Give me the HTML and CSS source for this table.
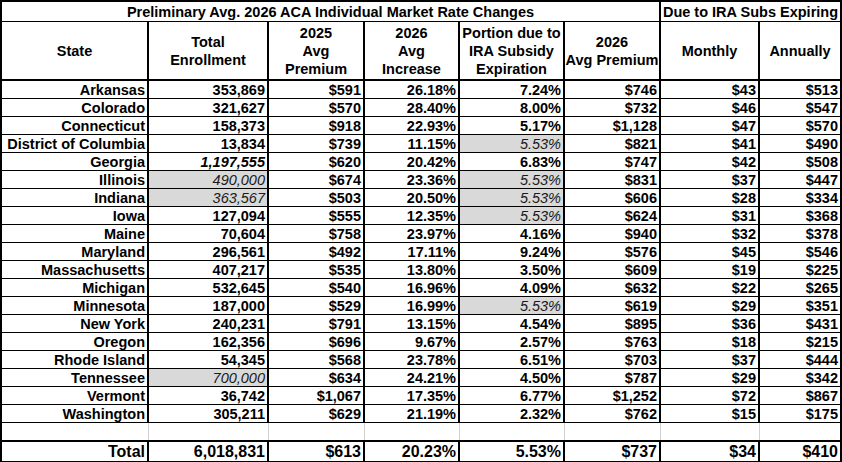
FILE: index.html
```html
<!DOCTYPE html>
<html>
<head>
<meta charset="utf-8">
<link rel="stylesheet" href="styles.css">
</head>
<body>
<table class="rates">
  <colgroup>
    <col class="c-state"><col class="c-enr"><col class="c-p25"><col class="c-inc"><col class="c-por"><col class="c-p26"><col class="c-mon"><col class="c-ann">
  </colgroup>
  <thead>
    <tr class="title-row">
      <th colspan="6">Preliminary Avg. 2026 ACA Individual Market Rate Changes</th>
      <th colspan="2">Due to IRA Subs Expiring</th>
    </tr>
    <tr class="head-row">
      <th>State</th>
      <th>Total<br>Enrollment</th>
      <th>2025<br>Avg<br>Premium</th>
      <th>2026<br>Avg<br>Increase</th>
      <th>Portion due to<br>IRA Subsidy<br>Expiration</th>
      <th>2026<br>Avg Premium</th>
      <th>Monthly</th>
      <th>Annually</th>
    </tr>
  </thead>
  <tbody>
    <tr><td>Arkansas</td><td>353,869</td><td>$591</td><td>26.18%</td><td>7.24%</td><td>$746</td><td>$43</td><td>$513</td></tr>
    <tr><td>Colorado</td><td>321,627</td><td>$570</td><td>28.40%</td><td>8.00%</td><td>$732</td><td>$46</td><td>$547</td></tr>
    <tr><td>Connecticut</td><td>158,373</td><td>$918</td><td>22.93%</td><td>5.17%</td><td>$1,128</td><td>$47</td><td>$570</td></tr>
    <tr><td>District of Columbia</td><td>13,834</td><td>$739</td><td>11.15%</td><td class="est">5.53%</td><td>$821</td><td>$41</td><td>$490</td></tr>
    <tr><td>Georgia</td><td class="it">1,197,555</td><td>$620</td><td>20.42%</td><td>6.83%</td><td>$747</td><td>$42</td><td>$508</td></tr>
    <tr><td>Illinois</td><td class="est">490,000</td><td>$674</td><td>23.36%</td><td class="est">5.53%</td><td>$831</td><td>$37</td><td>$447</td></tr>
    <tr><td>Indiana</td><td class="est">363,567</td><td>$503</td><td>20.50%</td><td class="est">5.53%</td><td>$606</td><td>$28</td><td>$334</td></tr>
    <tr><td>Iowa</td><td>127,094</td><td>$555</td><td>12.35%</td><td class="est">5.53%</td><td>$624</td><td>$31</td><td>$368</td></tr>
    <tr><td>Maine</td><td>70,604</td><td>$758</td><td>23.97%</td><td>4.16%</td><td>$940</td><td>$32</td><td>$378</td></tr>
    <tr><td>Maryland</td><td>296,561</td><td>$492</td><td>17.11%</td><td>9.24%</td><td>$576</td><td>$45</td><td>$546</td></tr>
    <tr><td>Massachusetts</td><td>407,217</td><td>$535</td><td>13.80%</td><td>3.50%</td><td>$609</td><td>$19</td><td>$225</td></tr>
    <tr><td>Michigan</td><td>532,645</td><td>$540</td><td>16.96%</td><td>4.09%</td><td>$632</td><td>$22</td><td>$265</td></tr>
    <tr><td>Minnesota</td><td>187,000</td><td>$529</td><td>16.99%</td><td class="est">5.53%</td><td>$619</td><td>$29</td><td>$351</td></tr>
    <tr><td>New York</td><td>240,231</td><td>$791</td><td>13.15%</td><td>4.54%</td><td>$895</td><td>$36</td><td>$431</td></tr>
    <tr><td>Oregon</td><td>162,356</td><td>$696</td><td>9.67%</td><td>2.57%</td><td>$763</td><td>$18</td><td>$215</td></tr>
    <tr><td>Rhode Island</td><td>54,345</td><td>$568</td><td>23.78%</td><td>6.51%</td><td>$703</td><td>$37</td><td>$444</td></tr>
    <tr><td>Tennessee</td><td class="est">700,000</td><td>$634</td><td>24.21%</td><td>4.50%</td><td>$787</td><td>$29</td><td>$342</td></tr>
    <tr><td>Vermont</td><td>36,742</td><td>$1,067</td><td>17.35%</td><td>6.77%</td><td>$1,252</td><td>$72</td><td>$867</td></tr>
    <tr><td>Washington</td><td>305,211</td><td>$629</td><td>21.19%</td><td>2.32%</td><td>$762</td><td>$15</td><td>$175</td></tr>
    <tr class="blank-row"><td></td><td></td><td></td><td></td><td></td><td></td><td></td><td></td></tr>
    <tr class="total-row"><td>Total</td><td>6,018,831</td><td>$613</td><td>20.23%</td><td>5.53%</td><td>$737</td><td>$34</td><td>$410</td></tr>
  </tbody>
</table>
</body>
</html>
```

FILE: styles.css
```css
html, body {
  margin: 0;
  padding: 0;
  background: #ffffff;
}

.rates {
  border-collapse: collapse;
  table-layout: fixed;
  width: 840px;
  font-family: "Liberation Sans", Arial, sans-serif;
  font-weight: bold;
  font-size: 14.5px;
  color: #000;
  margin-left: 0;
}

.c-state { width: 147px; }
.c-enr { width: 120px; }
.c-p25 { width: 96px; }
.c-inc { width: 95px; }
.c-por { width: 105px; }
.c-p26 { width: 96px; }
.c-mon { width: 99px; }
.c-ann { width: 82px; }

.rates th,
.rates td {
  border-left: 2px solid #000;
  border-right: 2px solid #000;
  border-top: 1px solid #000;
  border-bottom: 1px solid #000;
  padding: 0 2px 0 0;
  white-space: nowrap;
  overflow: hidden;
}

.rates th {
  text-align: center;
  font-weight: bold;
  padding: 0;
}

.title-row th {
  height: 19px;
  line-height: 16px;
  border-top: 2px solid #000;
}

.head-row th {
  height: 57px;
  line-height: 18px;
  border-bottom: 2px solid #000;
}

.rates td {
  text-align: right;
  height: 17px;
  line-height: 16px;
}

.rates td.est {
  background: #d9d9d9;
  font-style: italic;
  font-weight: normal;
  color: #1a1a1a;
}

.rates td.it {
  font-style: italic;
}

.blank-row td {
  border-left: 1px solid #d0d0d0;
  border-right: 1px solid #d0d0d0;
  border-bottom: 2px solid #000;
}

.blank-row td:first-child {
  border-left: 2px solid #000;
}

.blank-row td:last-child {
  border-right: 2px solid #000;
}

.total-row td {
  height: 19px;
  line-height: 19px;
  font-size: 16px;
  border-top: 2px solid #000;
  border-bottom: 2px solid #000;
}
```
